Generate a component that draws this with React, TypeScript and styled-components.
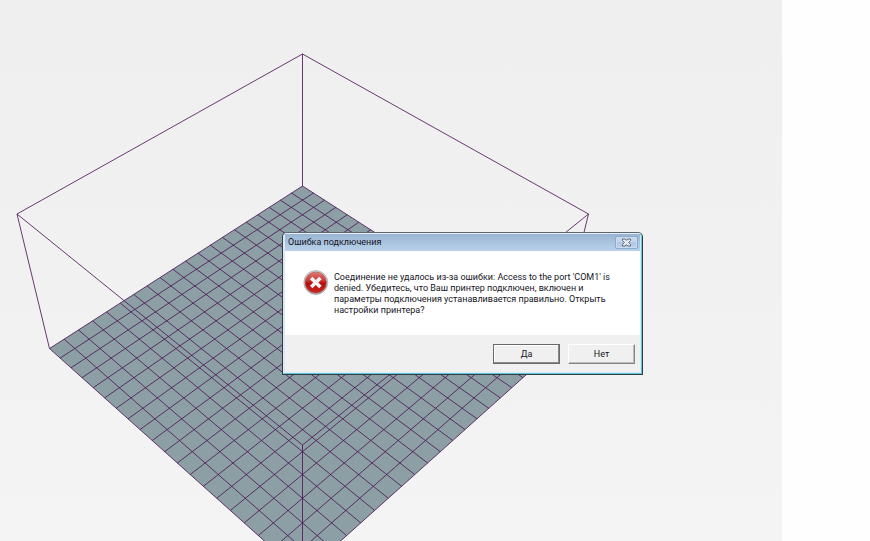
import React from 'react';
import styled, { createGlobalStyle } from 'styled-components';

const GlobalStyle = createGlobalStyle`
  *, *::before, *::after { box-sizing: border-box; }
  html, body, #root { height: 100%; }
  body {
    margin: 0;
    background: #ffffff;
    color: #15151d;
    font-family: Roboto, "Noto Sans", sans-serif;
    font-size: 9px;
    line-height: 11px;
  }
`;

const Page = styled.div`
  display: flex;
  min-height: 100vh;
`;

const Viewport = styled.main`
  position: relative;
  flex: 1;
  min-width: 0;
  overflow: hidden;
  background: linear-gradient(#efefef, #f1f1f1 50%, #f4f4f4);
`;

const SidePanel = styled.aside`
  flex: 0 0 88px;
  background: #fefefe;
`;

const Scene = styled.svg`
  position: absolute;
  top: 0;
  left: 0;
  overflow: visible;
`;

const Dialog = styled.section`
  position: absolute;
  top: 232px;
  left: 282px;
  width: 361px;
  overflow: hidden;
  border: 1px solid #333c42;
  border-top-color: #5c6770;
  border-radius: 5px 5px 0 0;
  background: #b9d1ea;
`;

const DialogFrame = styled.div`
  padding: 0 1px 1px;
  border: 1px solid #5cc8dc;
  border-top-color: #e6eff8;
  border-left-color: #dbe8f5;
  border-radius: 4px 4px 0 0;
  background: #dbe8f5;
`;

const TitleBar = styled.header`
  display: flex;
  align-items: center;
  justify-content: space-between;
  height: 17px;
  padding: 0 2px 0 3px;
  background: linear-gradient(#9ab5d3, #b9d1ea);
`;

const Title = styled.h1`
  margin: 0;
  font-size: 9px;
  font-weight: 400;
  line-height: 11px;
`;

const CloseButton = styled.button`
  display: flex;
  align-items: center;
  justify-content: center;
  width: 23px;
  height: 13px;
  padding: 0;
  border: 1px solid #8fa9c8;
  border-radius: 2px;
  background: linear-gradient(#c3d6ea 45%, #aec7e2 50%, #bdd3ea);
  box-shadow: inset 0 0 0 1px #c9dbee;
`;

const Body = styled.div`
  display: flex;
  gap: 5px;
  padding: 19px 25px 19px 18px;
  background: #ffffff;
`;

const ErrorIcon = styled.svg`
  flex: none;
`;

const Message = styled.p`
  flex: 1;
  margin: 2px 0 0;
`;

const Footer = styled.footer`
  display: flex;
  justify-content: flex-end;
  gap: 8px;
  padding: 9px 5px 8px;
  background: #f0f0f0;
`;

const ActionButton = styled.button<{ $isDefault?: boolean }>`
  width: 67px;
  height: 20px;
  padding: 0;
  border: 1px solid ${p => (p.$isDefault ? '#6a6a6a' : '#858585')};
  ${p => !p.$isDefault && 'border-top-color: #ffffff; border-left-color: #ffffff;'}
  background: #f0f0f0;
  box-shadow: inset -1px -1px 0 ${p => (p.$isDefault ? '#8a8a8a' : '#bcbcbc')}, inset 1px 1px 0 ${p => (p.$isDefault ? '#ffffff' : '#f0f0f0')};
  color: inherit;
  font: inherit;
`;

type Point = [number, number];

const CELLS = 20;
const CENTER_X = 302.5;

/* Perspective projection of the print bed; u and v run along its two back edges. */
const project = (u: number, v: number): Point => {
  const w = 1 - 0.00706 * (u + v);
  return [CENTER_X + (10.864 * (u - v)) / w, 186 + (6.98 * (u + v)) / w];
};

const line = (...points: Point[]) =>
  'M' + points.map(([x, y]) => `${x.toFixed(2)} ${y.toFixed(2)}`).join('L');

const back = project(0, 0);
const right = project(CELLS, 0);
const front = project(CELLS, CELLS);
const left = project(0, CELLS);

const topBack: Point = [CENTER_X, 54];
const topRight: Point = [588.5, 214];
const topFront: Point = [CENTER_X, 445];
const topLeft: Point = [17, 214];

const gridLines = Array.from({ length: CELLS + 1 }, (_, i) => [
  line(project(i, 0), project(i, CELLS)),
  line(project(0, i), project(CELLS, i)),
]).flat();

const boxLines = [
  line(topBack, topRight),
  line(topRight, topFront),
  line(topFront, topLeft),
  line(topLeft, topBack),
  line(topBack, back),
  line(topRight, right),
  line(topFront, front),
  line(topLeft, left),
];

function PrintBed() {
  return (
    <Scene width="782" height="600" viewBox="0 0 782 600" aria-hidden="true">
      <path d={`${line(back, right, front, left)}Z`} fill="#8b9fa4" />
      <g fill="none" stroke="#4f1a57" strokeWidth="1" strokeOpacity="0.85">
        {[...gridLines, ...boxLines].map((d, i) => (
          <path key={i} d={d} />
        ))}
      </g>
    </Scene>
  );
}

function CloseGlyph() {
  return (
    <svg width="11" height="9" viewBox="0 0 11 9" aria-hidden="true">
      <path
        d="M1.5 1H4.2L5.5 2.4 6.8 1H9.5V2.6L7.6 4.5 9.5 6.4V8H6.8L5.5 6.6 4.2 8H1.5V6.4L3.4 4.5 1.5 2.6Z"
        fill="#e6eaef"
        stroke="#5f6a77"
        strokeWidth="1"
      />
    </svg>
  );
}

function ErrorGlyph() {
  return (
    <ErrorIcon width="26" height="26" viewBox="0 0 26 26" role="img" aria-label="Ошибка">
      <defs>
        <linearGradient id="rim" x1="0" y1="0" x2="0" y2="1">
          <stop offset="0" stopColor="#d6d6d6" />
          <stop offset="1" stopColor="#a9a9a9" />
        </linearGradient>
        <linearGradient id="disc" x1="0" y1="0" x2="0" y2="1">
          <stop offset="0" stopColor="#dd7f79" />
          <stop offset="0.4" stopColor="#cb3a35" />
          <stop offset="0.55" stopColor="#b30d0d" />
          <stop offset="1" stopColor="#cc2a22" />
        </linearGradient>
      </defs>
      <circle cx="12.8" cy="12.5" r="12" fill="url(#rim)" stroke="#a2a2a2" strokeWidth="0.6" />
      <circle cx="12.8" cy="12.5" r="10.6" fill="url(#disc)" stroke="#b04a45" strokeWidth="0.5" />
      <path d="M8.2 7.9 17.4 17.1M17.4 7.9 8.2 17.1" stroke="#f6f4f4" strokeWidth="3.6" />
    </ErrorIcon>
  );
}

export default function App() {
  return (
    <>
      <GlobalStyle />
      <Page>
        <Viewport>
          <PrintBed />
          <Dialog role="alertdialog" aria-labelledby="dialog-title" aria-describedby="dialog-message">
            <DialogFrame>
              <TitleBar>
                <Title id="dialog-title">Ошибка подключения</Title>
                <CloseButton type="button" aria-label="Закрыть">
                  <CloseGlyph />
                </CloseButton>
              </TitleBar>
              <Body>
                <ErrorGlyph />
                <Message id="dialog-message">
                  Соединение не удалось из-за ошибки: Access to the port 'COM1' is denied. Убедитесь, что Ваш
                  принтер подключен, включен и параметры подключения устанавливается правильно. Открыть
                  настройки принтера?
                </Message>
              </Body>
              <Footer>
                <ActionButton type="button" $isDefault>
                  Да
                </ActionButton>
                <ActionButton type="button">Нет</ActionButton>
              </Footer>
            </DialogFrame>
          </Dialog>
        </Viewport>
        <SidePanel />
      </Page>
    </>
  );
}
